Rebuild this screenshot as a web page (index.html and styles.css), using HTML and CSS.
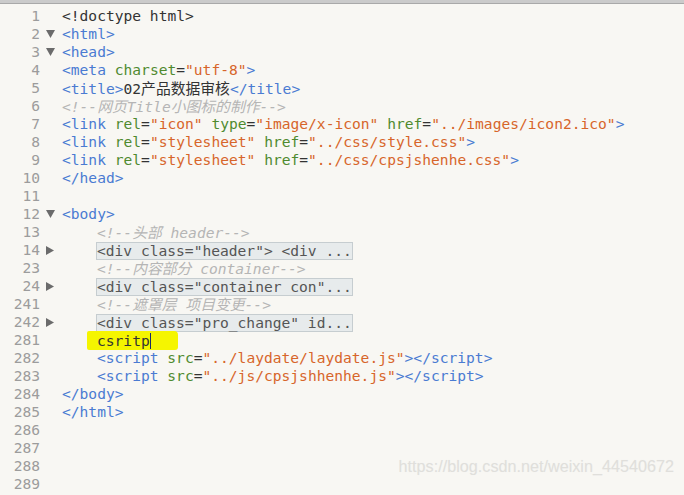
FILE: index.html
```html
<!DOCTYPE html>
<html>
<head>
<meta charset="utf-8">
<link rel="stylesheet" href="styles.css">
</head>
<body>
<div class="topbar"></div>
<div class="editor">
  <div class="ln"><span class="num">1</span><span class="fold"></span><span class="code"><span class="t">&lt;!doctype html&gt;</span></span></div>
  <div class="ln"><span class="num">2</span><span class="fold"><svg width="9" height="8" viewBox="0 0 9 8"><path d="M0 0H9L4.5 8Z" fill="#6b6b6b"/></svg></span><span class="code"><span class="tg">&lt;html&gt;</span></span></div>
  <div class="ln"><span class="num">3</span><span class="fold"><svg width="9" height="8" viewBox="0 0 9 8"><path d="M0 0H9L4.5 8Z" fill="#6b6b6b"/></svg></span><span class="code"><span class="tg">&lt;head&gt;</span></span></div>
  <div class="ln"><span class="num">4</span><span class="fold"></span><span class="code"><span class="tg">&lt;meta</span> <span class="at">charset</span><span class="t">=</span><span class="st">"utf-8"</span><span class="tg">&gt;</span></span></div>
  <div class="ln"><span class="num">5</span><span class="fold"></span><span class="code"><span class="tg">&lt;title&gt;</span><span class="t">02<span class="cjk">产品数据审核</span></span><span class="tg">&lt;/title&gt;</span></span></div>
  <div class="ln"><span class="num">6</span><span class="fold"></span><span class="code"><span class="cm">&lt;!--<span class="cjk">网页</span>Title<span class="cjk">小图标的制作</span>--&gt;</span></span></div>
  <div class="ln"><span class="num">7</span><span class="fold"></span><span class="code"><span class="tg">&lt;link</span> <span class="at">rel</span><span class="t">=</span><span class="st">"icon"</span> <span class="at">type</span><span class="t">=</span><span class="st">"image/x-icon"</span> <span class="at">href</span><span class="t">=</span><span class="st">"../images/icon2.ico"</span><span class="tg">&gt;</span></span></div>
  <div class="ln"><span class="num">8</span><span class="fold"></span><span class="code"><span class="tg">&lt;link</span> <span class="at">rel</span><span class="t">=</span><span class="st">"stylesheet"</span> <span class="at">href</span><span class="t">=</span><span class="st">"../css/style.css"</span><span class="tg">&gt;</span></span></div>
  <div class="ln"><span class="num">9</span><span class="fold"></span><span class="code"><span class="tg">&lt;link</span> <span class="at">rel</span><span class="t">=</span><span class="st">"stylesheet"</span> <span class="at">href</span><span class="t">=</span><span class="st">"../css/cpsjshenhe.css"</span><span class="tg">&gt;</span></span></div>
  <div class="ln"><span class="num">10</span><span class="fold"></span><span class="code"><span class="tg">&lt;/head&gt;</span></span></div>
  <div class="ln"><span class="num">11</span><span class="fold"></span><span class="code"></span></div>
  <div class="ln"><span class="num">12</span><span class="fold"><svg width="9" height="8" viewBox="0 0 9 8"><path d="M0 0H9L4.5 8Z" fill="#6b6b6b"/></svg></span><span class="code"><span class="tg">&lt;body&gt;</span></span></div>
  <div class="ln"><span class="num">13</span><span class="fold"></span><span class="code in"><span class="cm">&lt;!--<span class="cjk">头部</span> header--&gt;</span></span></div>
  <div class="ln"><span class="num">14</span><span class="fold"><svg width="8" height="9" viewBox="0 0 8 9"><path d="M0 0V9L8 4.5Z" fill="#6b6b6b"/></svg></span><span class="code in"><span class="box">&lt;div class="header"&gt; &lt;div ...</span></span></div>
  <div class="ln"><span class="num">23</span><span class="fold"></span><span class="code in"><span class="cm">&lt;!--<span class="cjk">内容部分</span> container--&gt;</span></span></div>
  <div class="ln"><span class="num">24</span><span class="fold"><svg width="8" height="9" viewBox="0 0 8 9"><path d="M0 0V9L8 4.5Z" fill="#6b6b6b"/></svg></span><span class="code in"><span class="box">&lt;div class="container con"...</span></span></div>
  <div class="ln"><span class="num">241</span><span class="fold"></span><span class="code in"><span class="cm">&lt;!--<span class="cjk">遮罩层</span> <span class="cjk">项目变更</span>--&gt;</span></span></div>
  <div class="ln"><span class="num">242</span><span class="fold"><svg width="8" height="9" viewBox="0 0 8 9"><path d="M0 0V9L8 4.5Z" fill="#6b6b6b"/></svg></span><span class="code in"><span class="box">&lt;div class="pro_change" id...</span></span></div>
  <div class="ln"><span class="num">281</span><span class="fold"></span><span class="code in"><span class="mark"><span class="t">csritp</span><span class="caret"></span></span></span></div>
  <div class="ln"><span class="num">282</span><span class="fold"></span><span class="code in"><span class="tg">&lt;script</span> <span class="at">src</span><span class="t">=</span><span class="st">"../laydate/laydate.js"</span><span class="tg">&gt;&lt;/script&gt;</span></span></div>
  <div class="ln"><span class="num">283</span><span class="fold"></span><span class="code in"><span class="tg">&lt;script</span> <span class="at">src</span><span class="t">=</span><span class="st">"../js/cpsjshhenhe.js"</span><span class="tg">&gt;&lt;/script&gt;</span></span></div>
  <div class="ln"><span class="num">284</span><span class="fold"></span><span class="code"><span class="tg">&lt;/body&gt;</span></span></div>
  <div class="ln"><span class="num">285</span><span class="fold"></span><span class="code"><span class="tg">&lt;/html&gt;</span></span></div>
  <div class="ln"><span class="num">286</span><span class="fold"></span><span class="code"></span></div>
  <div class="ln"><span class="num">287</span><span class="fold"></span><span class="code"></span></div>
  <div class="ln"><span class="num">288</span><span class="fold"></span><span class="code"></span></div>
  <div class="ln"><span class="num">289</span><span class="fold"></span><span class="code"></span></div>
</div>
<div class="watermark">https://blog.csdn.net/weixin_44540672</div>
</body>
</html>
```
FILE: styles.css
```css
html, body {
  margin: 0;
  padding: 0;
  background: #f8f7f3;
  overflow: hidden;
}
body {
  width: 684px;
  height: 495px;
  position: relative;
  font-family: "DejaVu Sans Mono", "Noto Sans CJK SC", monospace;
  font-size: 14.6px;
}
.topbar {
  height: 3px;
  background: #cbcbcb;
  border-bottom: 1px solid #a9a9a9;
}
.editor {
  padding-top: 3px;
}
.ln {
  display: flex;
  height: 18px;
  line-height: 18px;
  white-space: pre;
}
.num {
  width: 40px;
  text-align: right;
  color: #9c9c9c;
  flex: none;
}
.fold {
  width: 22px;
  flex: none;
  display: flex;
  align-items: center;
  padding-left: 6px;
  box-sizing: border-box;
}
.code {
  color: #333;
}
.code.in {
  padding-left: 35px;
}
.cjk {
  font-family: "Noto Sans CJK SC", sans-serif;
  font-size: 14.8px;
}
.t { color: #333333; }
.tg { color: #4a7bd2; }
.at { color: #4f8a2f; }
.st { color: #d7652a; }
.cm { color: #b5b5b5; font-style: italic; }
.box {
  display: inline-block;
  height: 16px;
  line-height: 16px;
  margin-left: -1px;
  margin-top: 1px;
  background: #e7ebec;
  border: 1px solid #c6cdd0;
  color: #555;
  vertical-align: top;
}
.mark {
  display: inline-flex;
  align-items: center;
  background: #f5f500;
  margin-left: -10px;
  padding: 0 27px 0 10px;
  height: 19px;
  border-radius: 2px 4px 3px 2px;
}
.caret {
  display: inline-block;
  width: 1px;
  height: 16px;
  background: #1a2a6a;
}
.watermark {
  position: absolute;
  right: 10px;
  top: 457px;
  font-family: "Liberation Sans", Arial, sans-serif;
  font-size: 16.2px;
  color: #e0dfdb;
  text-shadow: 0 0 1px #f0f0f0;
}
```
